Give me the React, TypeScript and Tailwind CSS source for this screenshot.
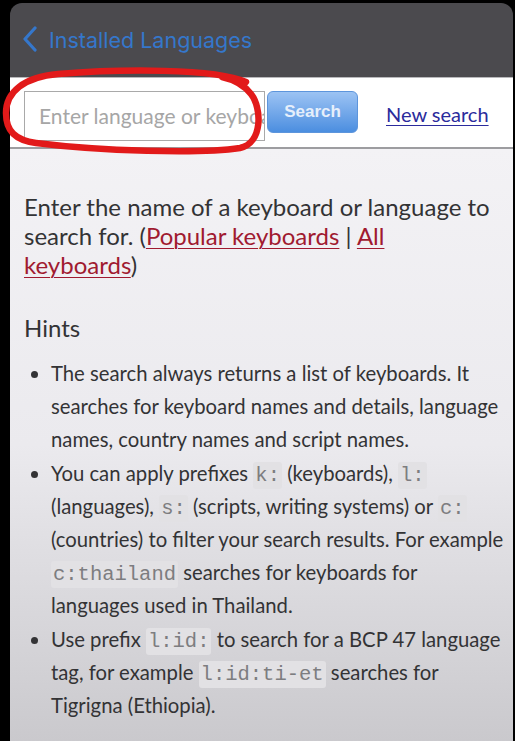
// App.tsx
// Keyman "Installed Languages" keyboard search screen, as seen on a phone.

const Code = ({ children }: { children: string }) => (
  <code className="rounded-[3px] bg-[#e2e1e4] px-[2px] py-[2px] font-['Liberation_Mono',monospace] text-[20.5px] leading-none text-[#7d7d80]">
    {children}
  </code>
);

export default function App() {
  return (
    <div className="relative flex h-[741px] w-[515px] overflow-hidden bg-black font-['Lato',sans-serif]">
      <div className="ml-[10px] mt-[3px] flex w-[503px] flex-col overflow-hidden rounded-t-[12px]">
        {/* nav bar */}
        <div className="flex h-[74px] shrink-0 items-center gap-[11px] bg-[#4b4a4e] pl-[12px]">
          <svg width="16" height="26" viewBox="0 0 16 26" className="mb-[2px]">
            <path d="M13 2 L3 13 L13 24" fill="none" stroke="#3577cb" strokeWidth="3.2" strokeLinecap="round" strokeLinejoin="round" />
          </svg>
          <span className="font-['Inter',sans-serif] text-[21.5px] text-[#3577cb]">Installed Languages</span>
        </div>

        {/* search row */}
        <div className="flex h-[70px] shrink-0 items-start border-t border-[#b8b8bb] bg-white pl-[14px] pt-[13px]">
          <div className="flex h-[50px] w-[241px] shrink-0 items-center overflow-hidden whitespace-nowrap border border-[#a9a9a9] pl-[14px] text-[21px] text-[#a6a6a6]">
            Enter language or keyboard
          </div>
          <div className="ml-[2px] flex h-[42px] w-[91px] shrink-0 items-center justify-center rounded-[6px] border border-[#5d95dc] bg-gradient-to-b from-[#9cc3f3] to-[#4b8ee0] font-['Liberation_Sans',sans-serif] text-[17px] font-bold text-[#e6effb]">
            Search
          </div>
          <span className="ml-[28px] mt-[8px] text-[20px] text-[#2b2b9c] underline decoration-1 underline-offset-[3px]">
            New search
          </span>
        </div>

        {/* content */}
        <div className="flex-1 border-t-2 border-[#9d9da0] bg-gradient-to-b from-[#f3f2f5] via-[#ebeaee] to-[#cac9cd] pl-[14px] pr-[7px] pt-[43px] text-[#333335]">
          <p className="w-[472px] text-[24px] leading-[29px]">
            Enter the name of a keyboard or language to search for. (
            <span className="text-[#a01a30] underline decoration-1 underline-offset-[3px]">Popular keyboards</span> |{' '}
            <span className="text-[#a01a30] underline decoration-1 underline-offset-[3px]">All keyboards</span>)
          </p>
          <h3 className="mt-[34px] text-[24px] leading-[29px]">Hints</h3>
          <ul className="mt-[15px] list-disc pl-[27px] text-[20.3px] leading-[33.2px]">
            <li>
              The search always returns a list of keyboards. It searches for keyboard names and details, language
              names, country names and script names.
            </li>
            <li>
              You can apply prefixes <Code>k:</Code> (keyboards), <Code>l:</Code> (languages), <Code>s:</Code>{' '}
              (scripts, writing systems) or <Code>c:</Code> (countries) to filter your search results. For example{' '}
              <Code>c:thailand</Code> searches for keyboards for languages used in Thailand.
            </li>
            <li>
              Use prefix <Code>l:id:</Code> to search for a BCP 47 language tag, for example <Code>l:id:ti-et</Code>{' '}
              searches for Tigrigna (Ethiopia).
            </li>
          </ul>
        </div>
      </div>

      {/* red hand-drawn annotation around the input */}
      <svg className="pointer-events-none absolute left-0 top-0" width="515" height="741">
        <path
          d="M246 82 C 215 68, 120 69, 58 74 C 24 77, 6 92, 6 113 C 6 131, 15 140, 36 143 C 100 151, 200 154, 240 148 C 263 143, 262 108, 251 94 C 244 85, 236 80, 222 77"
          fill="none"
          stroke="#e21a1a"
          strokeWidth="6.5"
          strokeLinecap="round"
        />
      </svg>
    </div>
  );
}
